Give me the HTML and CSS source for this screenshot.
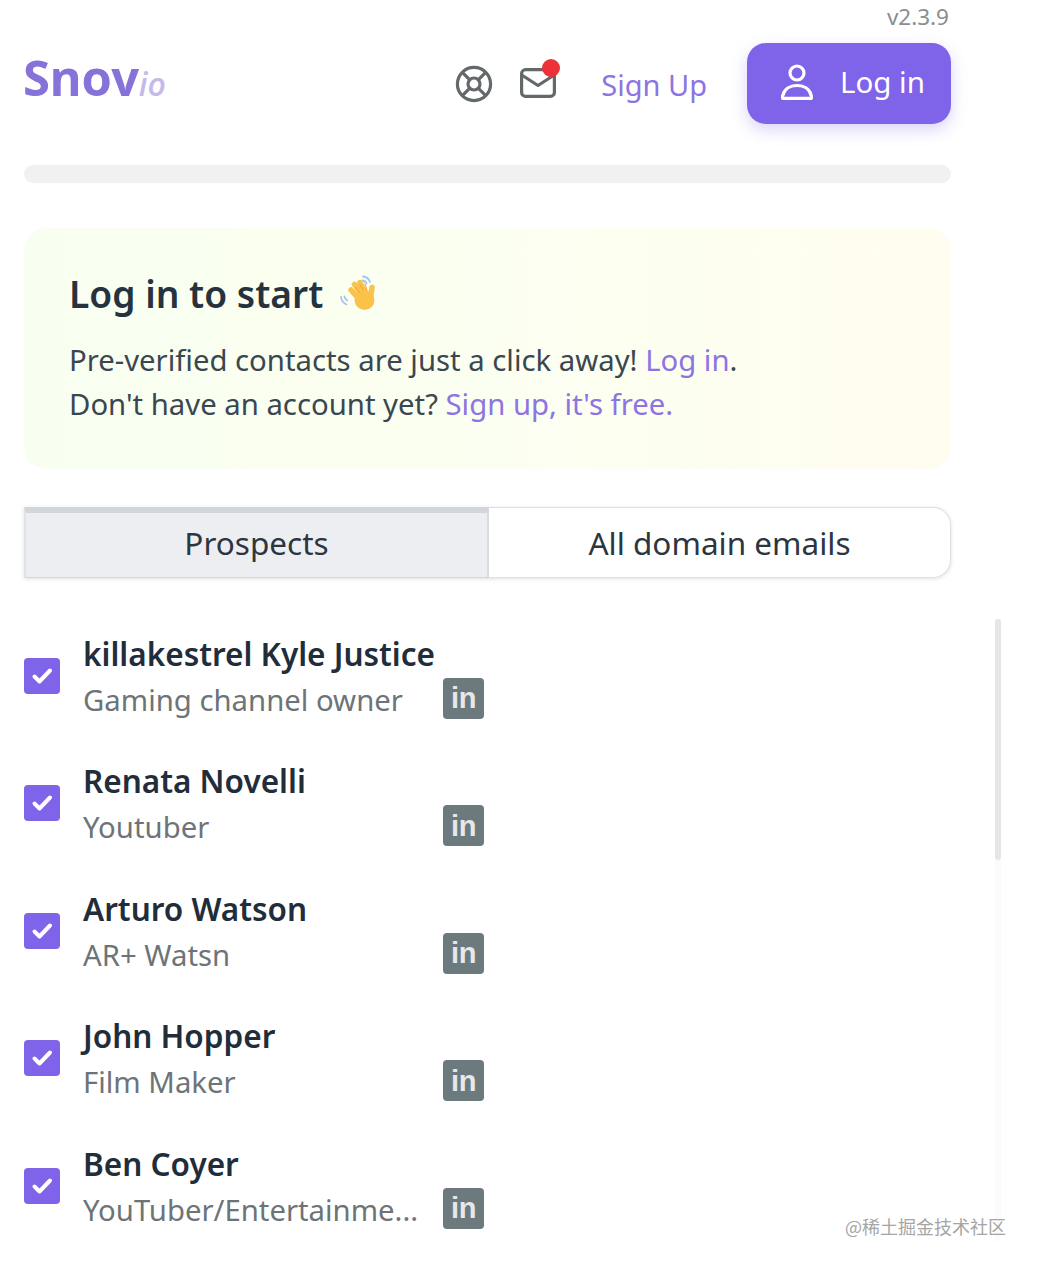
FILE: index.html
```html
<!DOCTYPE html>
<html lang="en">
<head>
<meta charset="utf-8">
<title>Snov.io</title>
<link rel="stylesheet" href="styles.css">
</head>
<body>
<div class="app">
  <div class="version">v2.3.9</div>
  <header class="header">
    <div class="logo">Snov<span class="logo-io">io</span></div>
    <div class="nav">
      <svg class="icon-help" viewBox="0 0 38 38" fill="none" stroke="#63686b" stroke-width="3.2">
        <circle cx="19" cy="19" r="16.6"/><circle cx="19" cy="19" r="6"/>
        <path d="M7.3 7.3l7.500 7.500M30.700 7.3l-7.500 7.500M7.3 30.700l7.500-7.500M30.700 30.700l-7.500-7.500"/>
      </svg>
      <div class="mail">
        <svg class="icon-mail" viewBox="0 0 36 30" fill="none" stroke="#63686b" stroke-width="3.2" stroke-linejoin="round" stroke-linecap="round">
          <rect x="1.6" y="1.6" width="32.800" height="26.800" rx="4"/>
          <path d="M2.500 7.500L18 17.500L33.500 7.500"/>
        </svg>
        <span class="mail-dot"></span>
      </div>
      <a class="signup">Sign Up</a>
      <button class="login">
        <svg class="icon-user" viewBox="0 0 32 36" fill="none" stroke="#fff" stroke-width="3.2" stroke-linejoin="round">
          <circle cx="16" cy="9" r="7"/>
          <path d="M2 34.400h28c.6 0 .6-1 .4-2.200C28.800 25 23 21.500 16 21.500S3.200 25 1.600 32.200c-.2 1.200-.2 2.200.4 2.200z"/>
        </svg>
        <span>Log in</span>
      </button>
    </div>
  </header>
  <div class="progress"></div>
  <section class="banner">
    <h2 class="banner-title">Log in to start
      <svg class="wave" viewBox="0 0 38 38" fill="none" stroke-linecap="round">
        <g stroke="#fbc24a" stroke-width="5.500">
          <path d="M13 16l8 9M16.500 10.500l8 11M22 8.500l5.500 11M34 13.500l-1.500 10.500"/>
        </g>
        <circle cx="26.500" cy="26" r="10" fill="#fbc24a"/>
        <path d="M17.500 13.500l4 5M22 10.500l3 5M27 10l2 6" stroke="#eda63a" stroke-width="1"/>
        <path d="M25 2.500c3.500.3 6 2.300 7 5.500M24.500 6.500c2 .2 3.200 1.200 4 3M3 23c.3 3 2.200 6 5.500 7.500M6.500 22.500c.3 1.800 1.200 3 2.800 4" stroke="#a9c3ee" stroke-width="1.800"/>
      </svg>
    </h2>
    <p class="banner-text">Pre-verified contacts are just a click away! <a class="link">Log in</a>.<br>Don't have an account yet? <a class="link">Sign up, it's free.</a></p>
  </section>
  <div class="tabs">
    <div class="tab tab-active">Prospects</div>
    <div class="tab">All domain emails</div>
  </div>
  <div class="list-wrap">
    <ul class="list">
      <li class="row">
        <span class="check"><svg viewBox="0 0 36 36" fill="none" stroke="#fff" stroke-width="4" stroke-linecap="round" stroke-linejoin="round"><path d="M10.500 18.500l5 5L26 12.500"/></svg></span>
        <div class="info"><div class="name">killakestrel Kyle Justice</div><div class="role">Gaming channel owner</div></div>
        <span class="li">in</span>
      </li>
      <li class="row">
        <span class="check"><svg viewBox="0 0 36 36" fill="none" stroke="#fff" stroke-width="4" stroke-linecap="round" stroke-linejoin="round"><path d="M10.500 18.500l5 5L26 12.500"/></svg></span>
        <div class="info"><div class="name">Renata Novelli</div><div class="role">Youtuber</div></div>
        <span class="li">in</span>
      </li>
      <li class="row">
        <span class="check"><svg viewBox="0 0 36 36" fill="none" stroke="#fff" stroke-width="4" stroke-linecap="round" stroke-linejoin="round"><path d="M10.500 18.500l5 5L26 12.500"/></svg></span>
        <div class="info"><div class="name">Arturo Watson</div><div class="role">AR+ Watsn</div></div>
        <span class="li">in</span>
      </li>
      <li class="row">
        <span class="check"><svg viewBox="0 0 36 36" fill="none" stroke="#fff" stroke-width="4" stroke-linecap="round" stroke-linejoin="round"><path d="M10.500 18.500l5 5L26 12.500"/></svg></span>
        <div class="info"><div class="name">John Hopper</div><div class="role">Film Maker</div></div>
        <span class="li">in</span>
      </li>
      <li class="row">
        <span class="check"><svg viewBox="0 0 36 36" fill="none" stroke="#fff" stroke-width="4" stroke-linecap="round" stroke-linejoin="round"><path d="M10.500 18.500l5 5L26 12.500"/></svg></span>
        <div class="info"><div class="name">Ben Coyer</div><div class="role">YouTuber/Entertainme...</div></div>
        <span class="li">in</span>
      </li>
    </ul>
    <div class="scrolltrack"><div class="scrollthumb"></div></div>
  </div>
</div>
<div class="watermark">@稀土掘金技术社区</div>
</body>
</html>
```
FILE: styles.css
```css
* { box-sizing: border-box; }
html, body { margin: 0; padding: 0; height: 100%; }
body {
  background: #fff;
  font-family: "Noto Sans", "Open Sans", sans-serif;
  color: #26323d;
  overflow: hidden;
  position: relative;
}
.app { padding: 0 86px 0 24px; }
.version {
  height: 34px;
  line-height: 34px;
  font-size: 22.500px;
  text-align: right;
  color: #8a8e90;
  padding-right: 2px;
}
.header {
  display: flex;
  justify-content: space-between;
  align-items: center;
  height: 81px;
  margin-top: 9px;
}
.logo {
  font-family: "Open Sans", "Noto Sans", sans-serif;
  font-weight: 700;
  font-size: 49px;
  line-height: 1;
  letter-spacing: -.4px;
  color: #8672d8;
  margin-top: -13px;
  margin-left: -1px;
}
.logo-io {
  font-size: 32px;
  font-style: italic;
  font-weight: 600;
  letter-spacing: 0;
  color: #c3baeb;
}
.nav { display: flex; align-items: center; }
.icon-help { width: 38px; height: 38px; display: block; margin: 1px 0 0 -2px; }
.mail { position: relative; width: 36px; height: 30px; margin-left: 27px; margin-top: -2px; }
.icon-mail { width: 36px; height: 30px; display: block; }
.mail-dot {
  position: absolute;
  top: -9px;
  right: -4px;
  width: 18px;
  height: 18px;
  border-radius: 50%;
  background: #ed3237;
}
.signup {
  font-size: 29px;
  color: #8d74e3;
  margin-left: 45px;
  margin-top: 2px;
}
.login {
  display: flex;
  align-items: center;
  width: 204px;
  height: 81px;
  margin-left: 40px;
  padding: 0 0 4px 34px;
  border: 0;
  border-radius: 19px;
  background: #7f63e8;
  color: #fff;
  font-family: inherit;
  font-size: 29.500px;
  box-shadow: 0 6px 16px rgba(127, 99, 232, .28);
}
.icon-user { width: 32px; height: 36px; display: block; margin-right: 27px; }
.progress {
  height: 18px;
  margin-top: 41px;
  border-radius: 9px;
  background: #f1f1f1;
}
.banner {
  height: 241px;
  margin-top: 45px;
  padding: 39px 46px 0;
  border-radius: 22px;
  background: linear-gradient(90deg, #f9fff0 0%, #fbfff1 50%, #fffdf0 100%);
}
.banner-title {
  display: flex;
  align-items: center;
  gap: 15px;
  margin: 0 0 0 -1px;
  height: 52px;
  font-size: 37.200px;
  font-weight: 600;
  color: #26323d;
}
.wave { width: 38px; height: 38px; display: block; }
.banner-text {
  margin: 20px 0 0 -1px;
  font-size: 29.300px;
  line-height: 43.500px;
  color: #3a4750;
}
.link { color: #8d74e3; }
.tabs {
  display: flex;
  height: 71px;
  margin-top: 38px;
  border-radius: 0 18px 18px 0;
  box-shadow: 0 1px 4px rgba(80, 90, 110, .18);
}
.tab {
  flex: 1;
  display: flex;
  align-items: center;
  justify-content: center;
  font-size: 31.500px;
  color: #2c3540;
  border: 1.500px solid #dcdfe3;
  border-left: 0;
  border-radius: 0 18px 18px 0;
  background: #fff;
}
.tab-active {
  border-radius: 0;
  border: 0;
  border-top: 6px solid #d2d5da;
  border-bottom: 1.500px solid #d2d5da;
  border-left: 2px solid #e1e3e7;
  border-right: 2px solid #d8dbe0;
  background: #eceef1;
  padding-bottom: 6px;
}
.list-wrap { position: relative; margin-top: 40.700px; }
.list { list-style: none; margin: 0; padding: 0; }
.row {
  display: flex;
  align-items: flex-start;
  height: 127.500px;
}
.check {
  flex: none;
  width: 36px;
  height: 36px;
  margin-top: 39px;
  border-radius: 4px;
  background: #7f63e8;
}
.check svg { display: block; width: 36px; height: 36px; }
.info { width: 360px; margin: 12px 0 0 23px; flex: none; }
.name {
  font-size: 31.500px;
  font-weight: 600;
  line-height: 46px;
  height: 46px;
  color: #222d3b;
  white-space: nowrap;
}
.role {
  font-size: 29.300px;
  line-height: 46px;
  height: 46px;
  color: #6d7478;
  white-space: nowrap;
}
.li {
  flex: none;
  display: flex;
  align-items: center;
  justify-content: center;
  width: 41px;
  height: 41px;
  margin-top: 59px;
  padding-top: 1px;
  border-radius: 4px;
  background: #6c7a7e;
  color: #e6e8e9;
  font-family: "Liberation Sans", sans-serif;
  font-size: 29px;
  font-weight: 700;
  letter-spacing: -.5px;
}
.scrolltrack {
  position: absolute;
  left: 971px;
  top: 0;
  width: 6px;
  height: 622px;
  background: #fbfbfd;
}
.scrollthumb {
  width: 6px;
  height: 241px;
  border-radius: 3px;
  background: #e6e6e9;
}
.watermark {
  position: absolute;
  left: 845px;
  top: 1213px;
  font-family: "Noto Sans CJK SC", sans-serif;
  font-size: 18px;
  line-height: 26px;
  white-space: nowrap;
  color: #a5a5a5;
}
```
